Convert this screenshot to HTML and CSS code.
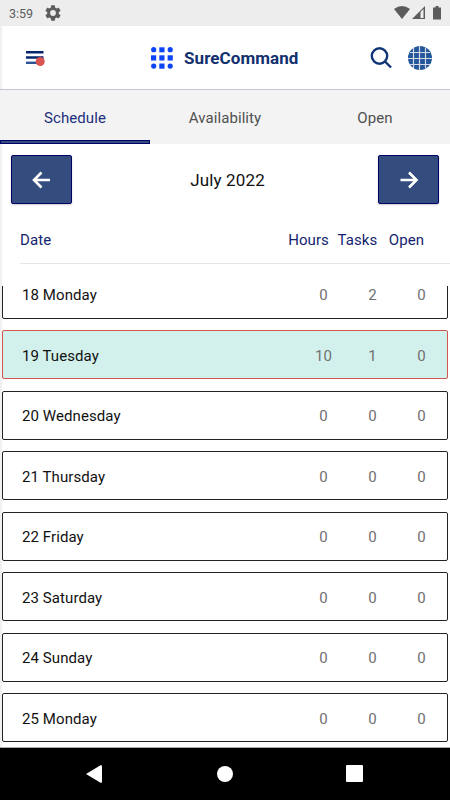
FILE: index.html
```html
<!DOCTYPE html>
<html lang="en">
<head>
    <meta charset="UTF-8">
    <meta name="viewport" content="width=device-width, initial-scale=1.0">
    <title>SureCommand</title>
    <link rel="stylesheet" href="styles.css">
</head>
<body>

    <!-- Status bar -->
    <div class="status-bar">
        <span class="time">3:59</span>
        <svg class="gear" width="16" height="16" viewBox="2 2 20 20"><path fill="#5c5c5c" d="M19.14 12.94c.04-.3.06-.61.06-.94 0-.32-.02-.64-.07-.94l2.03-1.58c.18-.14.23-.41.12-.61l-1.92-3.32c-.12-.22-.37-.29-.59-.22l-2.39.96c-.5-.38-1.03-.7-1.62-.94l-.36-2.54c-.04-.24-.24-.41-.48-.41h-3.84c-.24 0-.43.17-.47.41l-.36 2.54c-.59.24-1.13.57-1.62.94l-2.39-.96c-.22-.08-.47 0-.59.22L2.74 8.87c-.12.21-.08.47.12.61l2.03 1.58c-.05.3-.09.63-.09.94s.02.64.07.94l-2.03 1.58c-.18.14-.23.41-.12.61l1.92 3.32c.12.22.37.29.59.22l2.39-.96c.5.38 1.03.7 1.62.94l.36 2.54c.05.24.24.41.48.41h3.84c.24 0 .44-.17.47-.41l.36-2.54c.59-.24 1.13-.56 1.62-.94l2.39.96c.22.08.47 0 .59-.22l1.92-3.32c.12-.22.07-.47-.12-.61l-2.01-1.58zM12 15.6A3.6 3.6 0 1 1 12 8.4a3.6 3.6 0 0 1 0 7.2z"/></svg>
        <svg class="signals" width="48" height="16" viewBox="0 0 48 16">
            <path fill="#5c5c5c" d="M0 4Q8 -2 16 4L8 14z"/>
            <path fill="#5c5c5c" d="M18 14L31 1V14z"/>
            <path fill="#ededed" d="M26.5 7L29.5 4V13H26.5z"/>
            <path fill="#5c5c5c" d="M41.5 1h3v1.500h2.500v12h-8v-12h2.500z"/>
        </svg>
    </div>

    <!-- App header -->
    <header class="header">
        <svg class="menu" width="19" height="16" viewBox="0 0 19 16">
            <path fill="#06256f" d="M0 1h17.500v2.400H0zM0 6.300h17.500v2.400H0z"/>
            <path fill="#2b5596" d="M0 11.600h17.500v2.400H0z"/>
            <circle cx="14.200" cy="11.500" r="4.500" fill="#d9534f"/>
        </svg>
        <div class="brand">
            <svg width="22" height="22" viewBox="0 0 22 22" fill="#0b45f5">
                <circle cx="2.700" cy="2.700" r="2.600"/><rect x="8.300" y="0.300" width="5.200" height="5"/><circle cx="19.200" cy="2.700" r="2.600"/>
                <rect x="0" y="8.300" width="5.200" height="5.200"/><rect x="8.300" y="8.300" width="5.200" height="5.200"/><rect x="16.600" y="8.300" width="5.200" height="5.200"/>
                <circle cx="2.700" cy="19.100" r="2.600"/><rect x="8.300" y="16.500" width="5.200" height="5.200"/><circle cx="19.200" cy="19.100" r="2.600"/>
            </svg>
            <span class="brand-name">SureCommand</span>
        </div>
        <svg class="search" width="22" height="22" viewBox="0 0 22 22" fill="none" stroke="#123577" stroke-width="2.400">
            <circle cx="9.500" cy="9" r="7.700"/><path d="M15 14.500L21 20.500"/>
        </svg>
        <svg class="globe" width="24" height="24" viewBox="0 0 24 24">
            <circle cx="12" cy="12" r="12" fill="#24569a"/>
            <path stroke="#d3d9e5" stroke-width="1.200" fill="none" d="M5.500 2V22M11.500 0V24M17.500 1.500V22.500M2 6.500H22M0 12.500H24M2 18.500H22"/>
        </svg>
    </header>

    <!-- Tabs -->
    <nav class="tabs">
        <div class="tab active">Schedule</div>
        <div class="tab">Availability</div>
        <div class="tab">Open</div>
    </nav>

    <!-- Month picker -->
    <div class="month-bar">
        <button class="arrow">
            <svg width="20" height="18" viewBox="0 0 20 18"><path d="M18 9H2M9.500 1.500L2 9L9.500 16.500"/></svg>
        </button>
        <span class="month">July 2022</span>
        <button class="arrow">
            <svg width="20" height="18" viewBox="0 0 20 18"><path d="M1.500 9H17.500M10 1.500L17.500 9L10 16.500"/></svg>
        </button>
    </div>

    <!-- Column titles -->
    <div class="table-head">
        <span class="date">Date</span>
        <span class="col">Hours</span>
        <span class="col">Tasks</span>
        <span class="col">Open</span>
    </div>

    <!-- Days -->
    <div class="days">
        <div class="day"><span class="date">18 Monday</span><span class="num">0</span><span class="num">2</span><span class="num">0</span></div>
        <div class="day today"><span class="date">19 Tuesday</span><span class="num">10</span><span class="num">1</span><span class="num">0</span></div>
        <div class="day"><span class="date">20 Wednesday</span><span class="num">0</span><span class="num">0</span><span class="num">0</span></div>
        <div class="day"><span class="date">21 Thursday</span><span class="num">0</span><span class="num">0</span><span class="num">0</span></div>
        <div class="day"><span class="date">22 Friday</span><span class="num">0</span><span class="num">0</span><span class="num">0</span></div>
        <div class="day"><span class="date">23 Saturday</span><span class="num">0</span><span class="num">0</span><span class="num">0</span></div>
        <div class="day"><span class="date">24 Sunday</span><span class="num">0</span><span class="num">0</span><span class="num">0</span></div>
        <div class="day"><span class="date">25 Monday</span><span class="num">0</span><span class="num">0</span><span class="num">0</span></div>
    </div>

    <!-- Android navigation -->
    <div class="nav-bar">
        <svg width="16" height="18" viewBox="0 0 16 18"><path d="M0 9L14.500 0.300Q16 0 16 1V17Q16 18 14.500 17.700z"/></svg>
        <svg width="16" height="16" viewBox="0 0 16 16"><circle cx="8" cy="8" r="8"/></svg>
        <svg width="17" height="17" viewBox="0 0 17 17"><rect width="17" height="17" rx="1"/></svg>
    </div>

</body>
</html>
```
FILE: styles.css
```css
* {
    box-sizing: border-box;
}

body {
    font-family: Roboto, "Liberation Sans", sans-serif;
    font-size: 15px;
    letter-spacing: 0.08px;
    color: #111;
    background: #fff;
    margin: 0;
    height: 800px;
    display: flex;
    flex-direction: column;
    overflow: hidden;
    box-shadow: inset 2px 0 1px #f0f0f0;
}

svg {
    display: block;
    flex-shrink: 0;
}

.status-bar {
    height: 26px;
    background: #ededed;
    display: flex;
    align-items: center;
    padding: 0 8px 0 9px;
}

.time {
    width: 36px;
    font-size: 12.5px;
    letter-spacing: 0;
    color: #5c5c5c;
}

.signals {
    margin-left: auto;
}

.header {
    height: 64px;
    border-bottom: 1px solid #c5c8d2;
    display: flex;
    align-items: center;
    padding: 0 18px 0 26px;
}

.brand {
    display: flex;
    align-items: center;
    gap: 11px;
    margin-left: 106px;
}

.brand-name {
    font-size: 17px;
    font-weight: 700;
    color: #12306e;
}

.search {
    margin-left: auto;
    margin-right: 16px;
}

.tabs {
    height: 54px;
    background: #f3f3f3;
    display: flex;
}

.tab {
    flex: 1;
    display: flex;
    flex-direction: column;
    align-items: center;
    line-height: 18px;
    padding-top: 19px;
    color: #505050;
}

.tab.active {
    color: #1c2f7c;
}

/* underline of the selected tab */
.tab.active::after {
    content: "";
    box-sizing: border-box;
    width: 100%;
    height: 4px;
    margin-top: auto;
    background: #344c7e;
    border: 1px solid #00006b;
}

.month-bar {
    height: 60px;
    display: flex;
    align-items: flex-end;
    justify-content: space-between;
    padding: 0 11px;
}

.month {
    font-size: 17px;
    letter-spacing: 0.15px;
    line-height: 48px;
    margin-left: 5px;
}

.arrow {
    width: 61px;
    height: 49px;
    display: flex;
    align-items: center;
    justify-content: center;
    padding: 0;
    background: #344c7e;
    border: 1px solid #00006b;
    border-radius: 2px;
    box-shadow: 0 1px 2px rgba(0, 0, 0, 0.2);
}

.arrow path {
    fill: none;
    stroke: #fff;
    stroke-width: 2.6;
}

.table-head {
    height: 60px;
    margin: 0 0 22px 20px;
    padding: 13px 19px 0 0;
    border-bottom: 1px solid #e5e6e6;
    color: #14246f;
    display: flex;
    align-items: center;
}

.date {
    flex: 1;
}

.col {
    width: 49px;
    text-align: center;
}

.days {
    height: 461.5px;
    overflow: hidden;
    padding: 0 2px;
    border-bottom: 1px solid #aaa;
}

.day {
    height: 49px;
    margin-bottom: 11.55px;
    padding: 2px 1px 0 19px;
    border: 1px solid #222;
    border-radius: 2px;
    display: flex;
    align-items: center;
}

.day:first-child {
    margin-top: -16.4px;
}

.day.today {
    background: #d3f1ec;
    border-color: #d4544f;
}

.num {
    width: 49px;
    text-align: center;
    color: #707070;
}

.nav-bar {
    flex: 1;
    background: #000;
    display: flex;
    align-items: center;
    justify-content: space-between;
    padding: 0 87px 0 86px;
}

.nav-bar svg {
    fill: #fff;
}

.nav-bar svg:nth-child(2) {
    margin-left: 1px;
}
```
